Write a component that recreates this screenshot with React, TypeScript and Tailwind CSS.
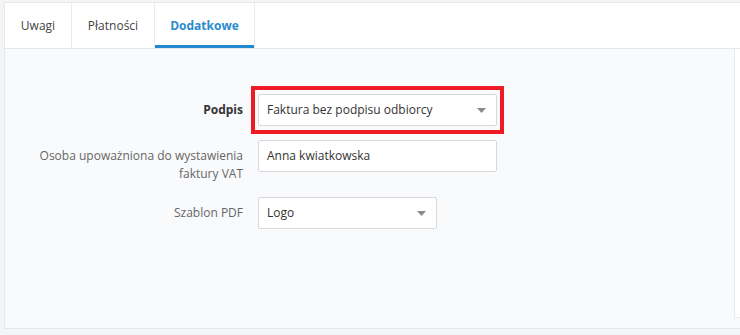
import React from "react";

const tabs = [
  { label: "Uwagi", width: "w-[67px]", active: false },
  { label: "Płatności", width: "w-[83px]", active: false },
  { label: "Dodatkowe", width: "w-[100px]", active: true },
];

// small grey caret used by the selects
const Caret = () => (
  <svg width="9" height="5" viewBox="0 0 9 5" className="shrink-0">
    <path d="M0 0 L9 0 L4.5 5 Z" fill="#8a8a8a" />
  </svg>
);

const SelectBox = ({ value, width }: { value: string; width: string }) => (
  <div
    className={`${width} h-[32px] flex items-center justify-between pl-[8px] pr-[10px] bg-white border border-[#d6d8db] rounded-[2px] text-[12px] text-[#333]`}
  >
    <span>{value}</span>
    <Caret />
  </div>
);

export default function App() {
  return (
    <div
      className="w-[740px] h-[335px] bg-[#f4f5f7] pt-[2px] overflow-hidden"
      style={{ fontFamily: '"Open Sans", "Noto Sans", sans-serif' }}
    >
      <div className="ml-[4px] border-l border-t border-[#e6e8eb] bg-white">
        {/* Tabs */}
        <div className="flex h-[45px]">
          {tabs.map((tab) => (
            <div
              key={tab.label}
              className={`${tab.width} relative flex items-center justify-center border-r border-[#e8eaed] text-[12px] ${
                tab.active ? "font-bold text-[#2b8ad0]" : "text-[#444]"
              }`}
            >
              {tab.label}
              {tab.active && (
                <div className="absolute left-0 right-0 bottom-0 h-[3px] bg-[#2089d1]" />
              )}
            </div>
          ))}
        </div>

        {/* Content */}
        <div className="h-[281px] bg-[#f9fafc] border-t border-b border-[#e4e6e9]">
          <div className="flex">
            <div className="flex-1 h-[269px] pt-[37px]">
              {/* Podpis */}
              <div className="flex items-center">
                <div className="w-[238px] text-right text-[12px] font-bold text-[#333]">Podpis</div>
                <div className="ml-[8px] border-[4px] border-[#ed1c24] px-[3px] py-[4px]">
                  <SelectBox value="Faktura bez podpisu odbiorcy" width="w-[239px]" />
                </div>
              </div>

              {/* Osoba upoważniona */}
              <div className="flex items-start mt-[6px]">
                <div className="w-[238px] pt-[7px] text-right text-[12px] leading-[18px] text-[#666]">
                  Osoba upoważniona do wystawienia
                  <br />
                  faktury VAT
                </div>
                <div className="ml-[15px] w-[239px] h-[32px] flex items-center pl-[8px] bg-white border border-[#d6d8db] rounded-[2px] text-[12px] text-[#333]">
                  Anna kwiatkowska
                </div>
              </div>

              {/* Szablon PDF */}
              <div className="flex items-center mt-[14px]">
                <div className="w-[238px] text-right text-[12px] text-[#666]">Szablon PDF</div>
                <div className="ml-[15px]">
                  <SelectBox value="Logo" width="w-[179px]" />
                </div>
              </div>
            </div>
            <div className="w-[6px] h-[269px] bg-white border-l border-b border-[#e8eaed]" />
          </div>
        </div>
      </div>
    </div>
  );
}
